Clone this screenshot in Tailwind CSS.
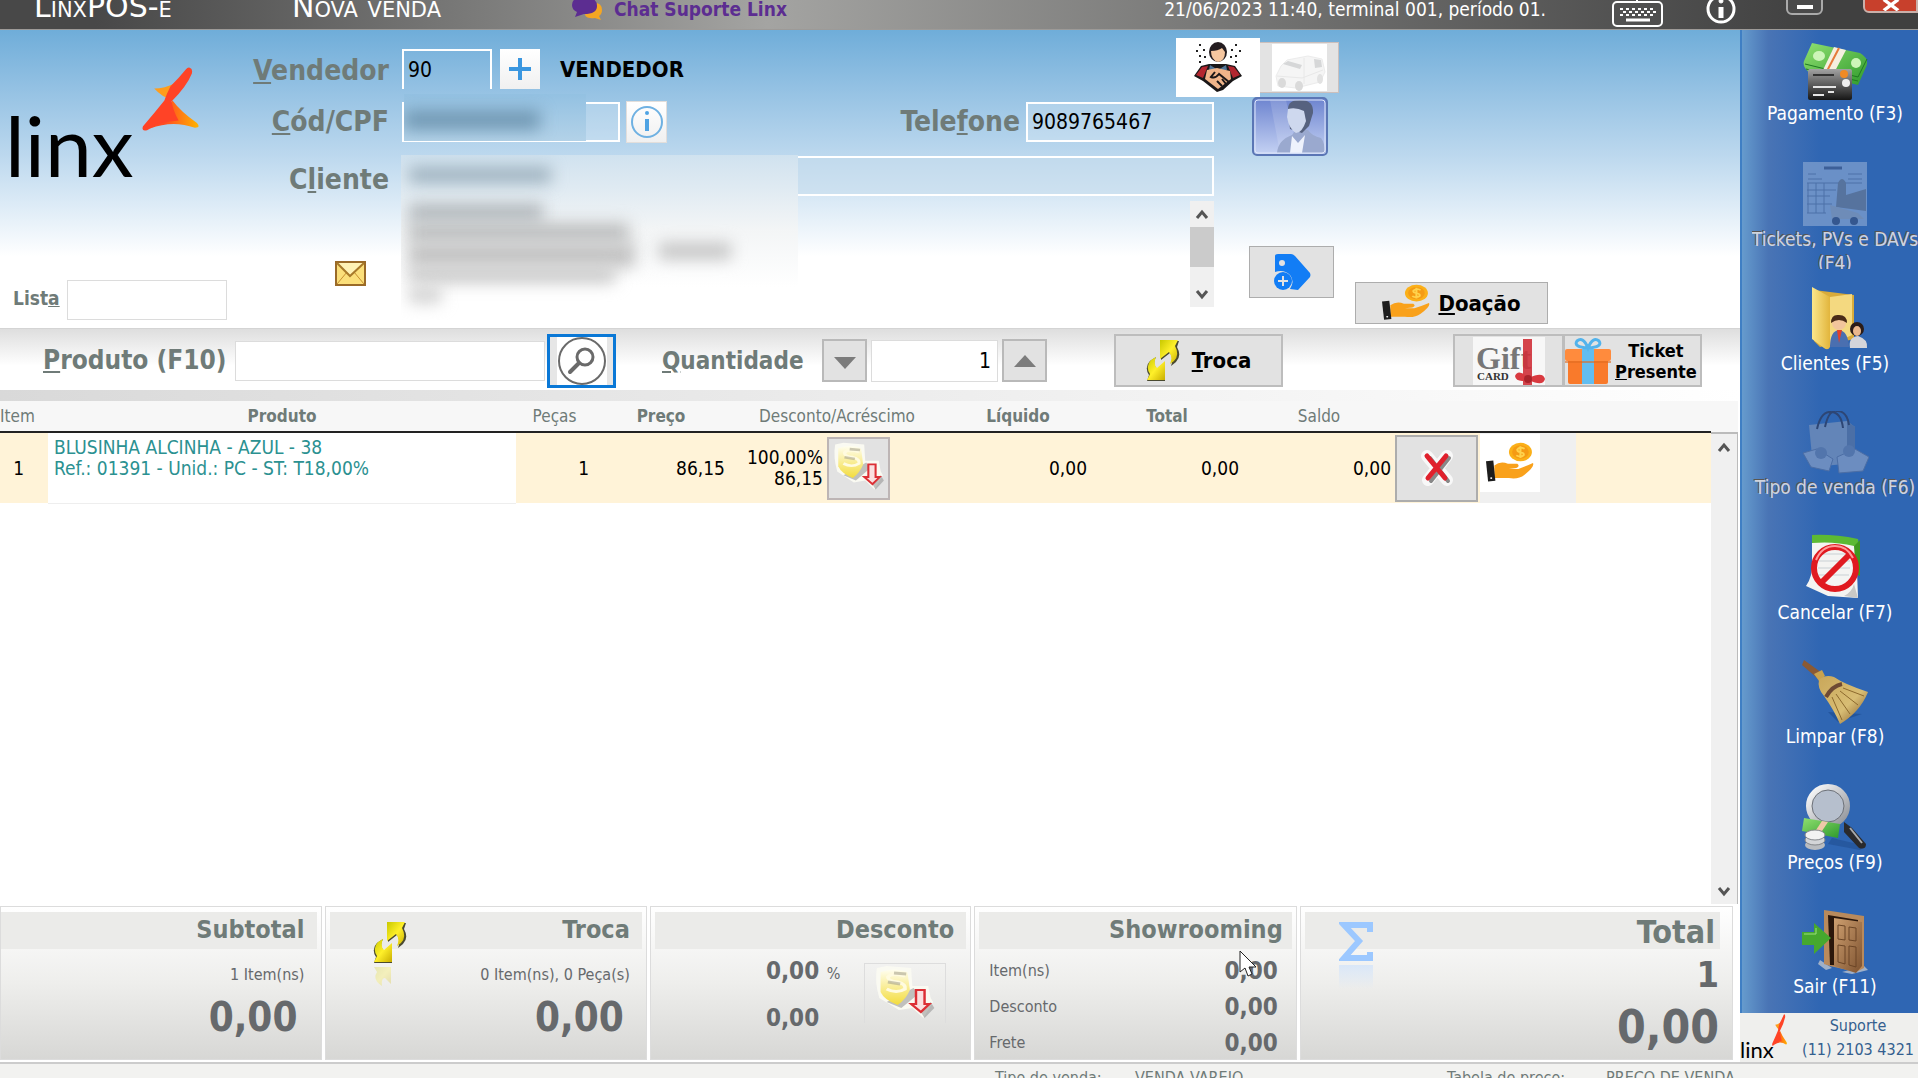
<!DOCTYPE html>
<html lang="pt-BR">

<head>
    <meta charset="UTF-8">
    <meta name="viewport" content="width=device-width, initial-scale=1">
    <title>LinxPOS-e | Nova venda</title>
    <script src="https://cdn.jsdelivr.net/npm/@tailwindcss/browser@4"></script>
</head>

<body class="h-screen flex flex-col overflow-hidden bg-white text-black font-['DejaVu_Sans_Condensed','Noto_Sans',sans-serif]">

    <!-- Shared drawings -->
    <svg class="absolute w-0 h-0" aria-hidden="true">
        <defs>
            <linearGradient id="orange" x1="0" y1="0" x2="1" y2="0"><stop offset="0.3" stop-color="#ff4b22"/><stop offset="1" stop-color="#ffb400"/></linearGradient>
            <linearGradient id="cash" x1="0" y1="0" x2="1" y2="1"><stop offset="0" stop-color="#8fe070"/><stop offset="1" stop-color="#2f9a2c"/></linearGradient>
            <linearGradient id="folder" x1="0" y1="0" x2="1" y2="0"><stop offset="0" stop-color="#fbe68b"/><stop offset="1" stop-color="#e2b53c"/></linearGradient>
            <linearGradient id="yellow" x1="0" y1="0" x2="1" y2="1"><stop offset="0" stop-color="#c8c800"/><stop offset="0.5" stop-color="#fff02a"/><stop offset="1" stop-color="#c9ae00"/></linearGradient>
            <linearGradient id="coin" x1="0" y1="0" x2="0" y2="1"><stop offset="0" stop-color="#fffef0"/><stop offset="1" stop-color="#f3dc3c"/></linearGradient>
            <linearGradient id="wood" x1="0" y1="0" x2="1" y2="1"><stop offset="0" stop-color="#cfa070"/><stop offset="1" stop-color="#7d5230"/></linearGradient>
            <linearGradient id="straw" x1="0" y1="0" x2="1" y2="1"><stop offset="0" stop-color="#c9a75a"/><stop offset="0.6" stop-color="#d8bd74"/><stop offset="1" stop-color="#7a4f20"/></linearGradient>
            <linearGradient id="silver" x1="0" y1="0" x2="1" y2="1"><stop offset="0" stop-color="#ffffff"/><stop offset="1" stop-color="#8c8f96"/></linearGradient>
            <linearGradient id="card" x1="0" y1="0" x2="0" y2="1"><stop offset="0" stop-color="#a3a3a3"/><stop offset="1" stop-color="#161616"/></linearGradient>
            <linearGradient id="portrait" x1="0" y1="0" x2="0" y2="1"><stop offset="0" stop-color="#6c83cf"/><stop offset="1" stop-color="#c6d3f4"/></linearGradient>

            <symbol id="flame" viewBox="0 0 56 80" preserveAspectRatio="none">
                <path d="M12 27 Q22 27 33 20 L28 40 Q20 38 12 27Z" fill="#ff9d1c"/>
                <path d="M30 42 Q38 56 54 70 Q58 76 52 76 Q30 66 8 77Z" fill="url(#orange)"/>
                <path d="M47 1 Q50 2 49 8 Q44 24 29 43 Q31 56 36 67 Q18 68 5 79 Q-1 81 1 74 Q12 58 22 42 Q24 34 28 24 Q36 14 43 3 Q45 0 47 1Z" fill="#ff4326"/>
            </symbol>

            <symbol id="swap" viewBox="0 0 34 42">
                <path d="M15 1 H33 L31 7 Q36 16 30 22 L25 26 Q28 18 24 13 L15 20Z" fill="#4a4a30"/>
                <path d="M19 41 H1 L3 35 Q-2 27 4 21 L10 17 Q6 24 11 29 L19 22Z" fill="#4a4a30"/>
                <path d="M14 0 H32 L29 6 Q34 15 28 21 L24 24 Q27 17 23 12 L14 19Z" fill="url(#yellow)"/>
                <path d="M19 40 H1 L4 34 Q-1 26 5 20 L10 17 Q7 24 11 28 L19 21Z" fill="url(#yellow)"/>
            </symbol>

            <symbol id="donate" viewBox="0 0 46 50" preserveAspectRatio="none">
                <circle cx="33" cy="12" r="11" fill="#fbb018"/>
                <circle cx="33" cy="12" r="8" fill="#f59b14"/>
                <path d="M37 8 Q32 5 30 9 Q30 12 33 12 Q37 13 36 16 Q33 19 29 16 M33 5 V19" fill="none" stroke="#ffd34d" stroke-width="2"/>
                <path d="M8 28 Q14 22 21 26 L30 26 Q33 29 29 31 L22 32 L31 32 Q38 29 45 25 Q47 29 37 39 Q31 45 22 43 L8 43Z" fill="#f9a11b"/>
                <path d="M0 23 L7 22 L9 46 L2 47Z" fill="#1d1d1d"/>
                <circle cx="5" cy="43" r="1" fill="#fff"/>
            </symbol>

            <symbol id="discount" viewBox="0 0 54 60" preserveAspectRatio="none">
                <path d="M4 4 L12 2 L32 4 L33 22 L40 22 L46 22 L48 34 L50 38 L42 54 L33 44 L22 46 L6 34 Q2 18 4 4Z" fill="#fafaf2"/>
                <path d="M12 38 L24 44 L38 30 L34 24Z" fill="#999" opacity="0.6"/>
                <path d="M7 8 Q18 3 29 8 L31 26 Q28 35 21 41 Q10 36 7 28Z" fill="url(#coin)"/>
                <path d="M27 12 Q16 8 13 13 Q13 17 21 18 Q28 20 27 25 Q20 30 12 25" fill="none" stroke="#fffbe0" stroke-width="3"/>
                <path d="M18 9 L28 10 M13 18 L23 20" stroke="#aaa690" stroke-width="3" opacity="0.6"/>
                <path d="M40 48 L48 38 L51 44 L43 54Z" fill="#888" opacity="0.5"/>
                <path d="M36 26 H43 V40 H47 L40 48 L32 40 H36Z" fill="#fbe0e0" stroke="#dc2f35" stroke-width="2"/>
            </symbol>
        </defs>
    </svg>

    <!-- Title bar -->
    <header class="h-[30px] shrink-0 flex items-center overflow-hidden text-[19px] leading-5 text-white bg-linear-to-r from-[#484848] via-[#a4a4a2] to-[#404040] from-5% via-40% to-95% border-b border-[#9d9a97]">
        <h1 class="ml-[34px] w-[258px] shrink-0 -mt-4 text-[30px] leading-7 whitespace-nowrap font-['DejaVu_Sans'] [font-variant-caps:small-caps]">LinxPOS-e</h1>
        <h2 class="w-[280px] shrink-0 -mt-4 text-[30px] leading-7 whitespace-nowrap font-['DejaVu_Sans'] [font-variant-caps:small-caps]">Nova venda</h2>
        <a href="#" class="flex items-center gap-3 -mt-3 font-bold text-[#5c2d91]">
            <svg width="30" height="24" viewBox="0 0 30 24">
                <path d="M18 6 Q30 4 30 13 Q30 17 27 19 L29 23 L23 21 Q15 22 13 18Z" fill="#f5a623"/>
                <path d="M12 0 Q25 0 25 9 Q25 17 12 17 L3 20 L5 15 Q0 13 0 8 Q0 0 12 0Z" fill="#5c2d91"/>
            </svg>
            Chat Suporte Linx
        </a>
        <p class="ml-auto -mt-3 whitespace-nowrap">21/06/2023 11:40, terminal 001, período 01.</p>
        <button aria-label="Teclado" class="ml-[66px] -mt-1">
            <svg width="52" height="30" viewBox="0 0 52 30" fill="none" stroke="#fff" stroke-width="2">
                <rect x="1" y="4" width="49" height="24" rx="4"/>
                <path d="M25 4 V0"/>
                <path d="M8 11 H44 M11 14 H44 M8 17 H44" stroke-dasharray="3 3"/>
                <path d="M14 22 H38" stroke-width="3"/>
            </svg>
        </button>
        <button aria-label="Informações" class="ml-[42px] -mt-3">
            <svg width="30" height="34" viewBox="0 0 30 34" fill="none" stroke="#fff">
                <circle cx="15" cy="17" r="13" stroke-width="3"/>
                <path d="M15 15 V26" stroke-width="5"/>
                <circle cx="15" cy="9" r="2" fill="#fff"/>
            </svg>
        </button>
        <button aria-label="Minimizar" class="ml-[50px] w-[37px] h-[28px] -mt-7 pt-3 flex justify-center items-center rounded-b-md border-2 border-[#aaa] bg-[#4a4a4a]">
            <span class="w-4 h-1 bg-white"></span>
        </button>
        <button aria-label="Fechar" class="ml-[40px] w-[55px] h-[28px] shrink-0 -mt-8 pt-3 flex justify-center items-center rounded-bl-md border-2 border-[#c9b0aa] bg-[#c8402c]">
            <svg width="18" height="12" viewBox="0 0 18 16" preserveAspectRatio="none"><path d="M2 1 L16 15 M16 1 L2 15" stroke="#fff" stroke-width="4"/></svg>
        </button>
    </header>

    <div class="flex flex-1 min-h-0">
        <main class="relative flex-1 min-w-0 flex flex-col">

            <!-- Customer form -->
            <form class="flex shrink-0 pb-1 bg-linear-to-b from-[#6fadd9] via-[#bcd8ee] to-white via-42% to-76%">
                <div class="w-[240px] shrink-0 flex flex-col justify-between pt-[37px] pb-[4px]">
                    <div class="flex items-end pl-[5px]" role="img" aria-label="Linx">
                        <span class="w-[137px] text-[84px] leading-[64px] -mb-[46px] font-['Lato']">linx</span>
                        <svg width="57" height="64"><use href="#flame"/></svg>
                    </div>
                    <div class="flex items-center pl-[13px]">
                        <label for="lista" class="w-[54px] pb-1 text-[19px] font-bold text-[#6f7b78]">List<u>a</u></label>
                        <input id="lista" type="text" class="w-[160px] h-10 px-2 text-xl bg-white border border-[#dcdcdc]">
                    </div>
                </div>

                <div class="flex-1 min-w-0">
                    <div class="flex items-center gap-[13px] h-[67px] pt-[7px]">
                        <label for="vendedor" class="w-[149px] pt-2 text-right text-[28px] font-bold text-[#6f7b78]"><u>V</u>endedor</label>
                        <div class="flex items-center mt-1">
                            <input id="vendedor" type="text" value="90" class="w-[90px] h-10 px-1 text-[21px] border-2 border-b-0 border-white">
                            <button type="button" aria-label="Adicionar vendedor" class="ml-2 w-10 h-10 flex items-center justify-center bg-linear-to-b from-white to-[#f0f0f0]">
                                <svg width="22" height="22" viewBox="0 0 22 22"><path d="M11 0 V22 M0 11 H22" stroke="#3b97e0" stroke-width="4"/></svg>
                            </button>
                            <p class="ml-5 text-[22px] font-bold">VENDEDOR</p>
                        </div>
                        <div class="flex items-center ml-auto mr-[401px]">
                            <button type="button" aria-label="Atendimento" class="w-[84px] h-[59px] flex items-center justify-center bg-white">
                                <svg width="50" height="50" viewBox="0 0 50 50">
                                    <path d="M6 3 h2 M10 8 h2 M3 9 h2 M6 14 h2 M11 15 h2 M6 20 h2 M42 3 h2 M38 8 h2 M46 9 h2 M42 14 h2 M37 15 h2 M42 20 h2" stroke="#222" stroke-width="2"/>
                                    <path d="M16 22 L33 22 L42 24 L49 34 L40 39 L30 48 L24 50 L10 39 L1 34 L8 24Z" fill="#1a1718"/>
                                    <path d="M9 25 L15 24 L10 36 L3 33Z M41 25 L35 24 L40 36 L47 33Z" fill="#b3262f"/>
                                    <path d="M17 23 L25 28 L33 23 L34 28 L16 28Z" fill="#4f7396"/>
                                    <path d="M14 28 L24 26 L37 29 L38 37 L25 47 L12 37Z" fill="#f0b58a"/>
                                    <path d="M22 30 L18 35 Q22 37 26 32 L36 40 M29 37 L33 42 M24 39 L29 44" stroke="#1a1718" stroke-width="2" fill="none"/>
                                    <ellipse cx="25" cy="10" rx="9" ry="10" fill="#241d20"/>
                                    <path d="M18 9 Q25 9 29 6 L32 10 Q32 19 25 20 Q18 18 18 9Z" fill="#f6c7a0"/>
                                </svg>
                            </button>
                            <button type="button" aria-label="Veículo" disabled class="w-[79px] h-[51px] flex items-center justify-center bg-[#e3e3e3] border border-l-0 border-[#cbbfbc]">
                                <svg width="55" height="47" viewBox="0 0 55 47">
                                    <rect width="55" height="47" fill="#fff"/>
                                    <path d="M9 22 L15 16 L36 12 L50 15 L53 28 L48 38 L24 44 L6 42 L4 32Z" fill="#f5f5f5" stroke="#ececec"/>
                                    <path d="M11 20 L16 17 L30 21 L28 25Z M42 15 L49 16 L50 23 L43 24Z" fill="#d6d7d8"/>
                                    <path d="M32 14 V40 M5 32 L30 34 L51 26" stroke="#e8e8e8" fill="none"/>
                                    <ellipse cx="10" cy="39" rx="4" ry="5" fill="#dadada"/><ellipse cx="27" cy="42" rx="4" ry="5" fill="#dadada"/><ellipse cx="48" cy="35" rx="3" ry="5" fill="#e2e2e2"/>
                                </svg>
                            </button>
                        </div>
                    </div>

                    <div class="flex">
                        <div class="flex-1 max-w-[974px] pt-[5px]">
                            <div class="flex items-center gap-[13px] mb-[14px]">
                                <label for="cpf" class="w-[149px] text-right text-[28px] leading-10 font-bold text-[#6f7b78]"><u>C</u>ód/CPF</label>
                                <div class="flex items-center flex-1">
                                    <div class="relative">
                                        <input id="cpf" type="text" class="block w-[218px] h-10 px-1 text-[21px] border-2 border-white bg-white/20">
                                        <div class="absolute left-[2px] -top-2 w-[182px] h-[47px] overflow-hidden bg-linear-to-b from-[#93c1e2] to-[#b3d2e8]">
                                            <div class="mt-4 w-[136px] h-5 bg-[#5d84a0]/70 blur-[8px]"></div>
                                        </div>
                                    </div>
                                    <button type="button" aria-label="Informações do cliente" class="ml-[6px] w-[41px] h-[42px] -my-px flex items-center justify-center bg-linear-to-b from-white to-[#f0f0f0] border border-[#e2dedb]">
                                        <svg width="36" height="36" viewBox="0 0 36 36" fill="none">
                                            <circle cx="18" cy="18" r="15" stroke="#6fb1e2" stroke-width="2"/>
                                            <path d="M18 15 V27" stroke="#4fa3e3" stroke-width="4"/>
                                            <circle cx="18" cy="9" r="2" fill="#4fa3e3"/>
                                        </svg>
                                    </button>
                                    <label for="telefone" class="ml-auto mr-[6px] text-[28px] leading-10 font-bold text-[#6f7b78]">Tele<u>f</u>one</label>
                                    <input id="telefone" type="text" value="9089765467" class="w-[188px] h-10 px-1 text-[21px] border-2 border-white bg-white/20">
                                </div>
                            </div>
                            <div class="relative">
                                <div class="flex items-center gap-[13px] mb-[5px]">
                                    <label for="cliente" class="w-[149px] h-10 pt-1 text-right text-[28px] leading-10 font-bold text-[#6f7b78]">C<u>l</u>iente</label>
                                    <input id="cliente" type="text" class="flex-1 h-10 px-1 text-[21px] border-2 border-white bg-[#c5dbeb]/50">
                                </div>
                                <div class="flex">
                                    <div class="w-[162px] flex justify-end items-start pt-[60px] pr-9">
                                        <button type="button" aria-label="E-mail">
                                            <svg width="31" height="25" viewBox="0 0 31 25">
                                                <rect x="1" y="1" width="29" height="23" fill="#fbdf7a" stroke="#9a6a28" stroke-width="2"/>
                                                <path d="M2 23 L12 11 M29 23 L19 11" stroke="#c78f2e" fill="none"/>
                                                <path d="M2 2 L15 15 L29 2" fill="#fff2b5" stroke="#a87a2a" stroke-width="2"/>
                                            </svg>
                                        </button>
                                    </div>
                                    <textarea aria-label="Endereço do cliente" class="flex-1 h-[106px] resize-none"></textarea>
                                    <div class="w-6 h-[106px] flex flex-col items-center bg-[#f0f0f0]">
                                        <svg width="24" height="26" viewBox="0 0 24 26"><path d="M7 17 L12 11 L17 17" fill="none" stroke="#555" stroke-width="3"/></svg>
                                        <div class="w-full h-10 bg-[#cbcbcb]"></div>
                                        <svg width="24" height="26" viewBox="0 0 24 26" class="mt-auto"><path d="M7 10 L12 16 L17 10" fill="none" stroke="#555" stroke-width="3"/></svg>
                                    </div>
                                </div>
                                <!-- Masked customer data -->
                                <div class="absolute left-[161px] -top-px w-[397px] h-[165px] overflow-hidden bg-linear-to-b from-[#d0e2ef] via-[#f3f5f6] to-white via-45% to-80%">
                                    <div class="ml-2 mt-3 w-[142px] h-4 bg-[#8da2b0]/80 blur-[8px]"></div>
                                    <div class="ml-2 mt-5 w-[134px] h-5 bg-[#b4babe] blur-[8px]"></div>
                                    <div class="ml-2 w-[220px] h-5 bg-[#bcbebf] blur-[8px]"></div>
                                    <div class="flex gap-6 ml-2">
                                        <div class="w-[226px] h-6 bg-[#c2c2c2] blur-[8px]"></div>
                                        <div class="w-[72px] h-4 bg-[#c2c2c2] blur-[8px]"></div>
                                    </div>
                                    <div class="ml-2 w-[206px] h-4 bg-[#c8c8c8] blur-[8px]"></div>
                                    <div class="ml-2 mt-1 w-8 h-4 bg-[#cfcfcf] blur-[8px]"></div>
                                </div>
                            </div>
                        </div>

                        <div class="flex items-end shrink-0 ml-[35px]">
                            <div class="self-start flex flex-col gap-[90px] w-[85px]">
                                <button type="button" aria-label="Foto do cliente" class="ml-[3px] w-[76px] h-[59px]">
                                    <svg width="76" height="59" viewBox="0 0 76 59">
                                        <rect x="1" y="1" width="74" height="57" rx="4" fill="url(#portrait)" stroke="#5b76b5" stroke-width="2"/>
                                        <path d="M18 3 H34 L46 56 H28Z" fill="#fff" opacity="0.14"/>
                                        <path d="M25 56 Q26 43 40 38 L44 33 L56 33 Q60 39 69 41 Q73 46 73 56Z" fill="#9aa9cf"/>
                                        <path d="M40 39 L46 46 L53 38 L50 56 H38Z" fill="#eef2fc"/>
                                        <path d="M36 12 Q36 3 48 3 Q62 3 61 16 L57 29 L50 36 L38 32Z" fill="#56627f"/>
                                        <path d="M36 12 Q44 10 52 14 L54 24 Q50 36 44 36 Q37 32 35 20Z" fill="#ced8ee"/>
                                        <rect x="3" y="3" width="70" height="53" rx="3" fill="none" stroke="#dfe7fa" stroke-width="1"/>
                                    </svg>
                                </button>
                                <button type="button" aria-label="Adicionar etiqueta" class="w-[85px] h-[52px] flex items-center justify-center bg-[#e2e2e2] border border-[#adadad]">
                                    <svg width="38" height="38" viewBox="0 0 38 38">
                                        <path d="M2 3 Q2 1 5 1 L18 1 Q20 1 22 3 L37 20 Q38 22 37 24 L25 37 L17 36 Q22 28 17 22 Q11 16 2 19Z" fill="#127df5"/>
                                        <circle cx="9" cy="10" r="3" fill="#e2e2e2"/>
                                        <circle cx="10" cy="28" r="9" fill="#127df5"/>
                                        <path d="M10 23 V33 M5 28 H15" stroke="#e2e2e2" stroke-width="2"/>
                                    </svg>
                                </button>
                            </div>
                            <button type="button" class="mt-[185px] ml-[21px] mr-[192px] w-[193px] h-[42px] flex items-center justify-center gap-2 text-[22px] font-bold bg-[#e2e2e2] border border-[#adadad]">
                                <svg width="48" height="38"><use href="#donate"/></svg>
                                <span><u>D</u>oação</span>
                            </button>
                        </div>
                    </div>
                </div>
            </form>

            <!-- Product bar -->
            <form class="flex items-center shrink-0 h-[62px] pt-[2px] pr-[38px] border-t border-[#d4d4d4] bg-linear-to-b from-[#dedede] to-white to-60%">
                <label for="produto" class="w-[235px] shrink-0 pl-[43px] text-[26px] font-bold text-[#6f7b78]"><u>P</u>roduto (F10)</label>
                <input id="produto" type="text" class="w-[310px] h-10 px-2 text-[21px] bg-white border border-[#dcdcdc]">
                <button type="button" aria-label="Pesquisar" class="ml-[2px] w-[69px] h-[54px] flex items-center justify-center border-3 border-[#0a78d6] bg-[#e6e6e6]">
                    <svg width="50" height="48" viewBox="0 0 50 48" fill="none" stroke="#6a6a6a">
                        <rect width="50" height="48" fill="#fff" stroke="none"/>
                        <circle cx="25" cy="24" r="23" stroke-width="2"/>
                        <circle cx="28" cy="20" r="8" stroke-width="3"/>
                        <path d="M22 26 L13 35" stroke-width="4" stroke-linecap="round"/>
                    </svg>
                </button>
                <label for="quantidade" class="ml-[46px] w-[160px] text-2xl font-bold text-[#6f7b78]"><u>Q</u>uantidade</label>
                <button type="button" aria-label="Diminuir" class="w-[45px] h-[43px] pt-1 flex items-center justify-center bg-[#e2e2e2] border-2 border-[#b9b9b9]">
                    <svg width="22" height="12"><path d="M0 0 H22 L11 12Z" fill="#7c7c7c"/></svg>
                </button>
                <input id="quantidade" type="text" value="1" class="mx-1 w-[127px] h-[42px] px-[6px] text-right text-[21px] bg-white border border-[#dcdcdc]">
                <button type="button" aria-label="Aumentar" class="w-[45px] h-[43px] flex items-center justify-center bg-[#e2e2e2] border-2 border-[#b9b9b9]">
                    <svg width="22" height="12"><path d="M0 12 H22 L11 0Z" fill="#7c7c7c"/></svg>
                </button>
                <button type="button" class="ml-[67px] w-[169px] h-[53px] flex items-center justify-center gap-3 text-[22px] font-bold bg-[#e2e2e2] border-2 border-[#bdbdbd]">
                    <svg width="34" height="42"><use href="#swap"/></svg>
                    <span><u>T</u>roca</span>
                </button>
                <div class="ml-auto flex">
                    <button type="button" aria-label="Gift Card" class="w-[111px] h-[53px] flex items-center justify-center bg-[#e2e2e2] border-2 border-[#bdbdbd]">
                        <svg width="72" height="48" viewBox="0 0 72 48">
                            <rect width="72" height="48" fill="#f7f7f7"/>
                            <text x="3" y="32" font-family="Liberation Serif" font-size="32" font-weight="bold" fill="#777">Gift</text>
                            <text x="4" y="43" font-family="Liberation Serif" font-size="11" font-weight="bold" fill="#333">CARD</text>
                            <rect x="50" y="2" width="9" height="46" fill="#cf3038" opacity="0.9"/>
                            <path d="M56 41 Q45 31 42 39 Q43 46 56 43 Q70 50 72 42 Q70 34 56 41Z" fill="#d93a40"/>
                            <circle cx="55" cy="42" r="4" fill="#a9242b"/>
                        </svg>
                    </button>
                    <button type="button" class="-ml-px w-[139px] h-[53px] flex items-center gap-1 text-lg leading-[21px] font-bold bg-[#e2e2e2] border-2 border-[#bdbdbd]">
                        <svg width="46" height="48" viewBox="0 0 46 48">
                            <rect x="3" y="17" width="40" height="30" rx="2" fill="#f97a2b"/>
                            <rect x="0" y="12" width="46" height="12" rx="2" fill="#ff8b3d"/>
                            <rect x="17" y="12" width="12" height="35" fill="#62bdf0"/>
                            <rect x="0" y="24" width="46" height="2" fill="#e06a1f" opacity="0.6"/>
                            <path d="M23 11 Q8 10 12 4 Q18 -1 23 11 Q28 -1 34 4 Q38 10 23 11Z" fill="none" stroke="#52b3ec" stroke-width="3"/>
                        </svg>
                        <span>Ticket<br><u>P</u>resente</span>
                    </button>
                </div>
            </form>
            <div class="h-[11px] shrink-0 bg-linear-to-r from-[#d9d9d9] to-white"></div>

            <!-- Items -->
            <section class="flex flex-1 min-h-0 pr-[2px]">
                <div class="flex-1 min-w-0">
                    <table class="w-full table-fixed text-[19px] leading-[21px]">
                        <colgroup>
                            <col class="w-[48px]"><col class="w-[468px]"><col class="w-[77px]"><col class="w-[136px]"><col class="w-[216px]"><col class="w-[146px]">
                            <col class="w-[152px]"><col class="w-[152px]"><col class="w-[85px]"><col class="w-[96px]"><col>
                        </colgroup>
                        <thead class="text-[17px] text-[#6f7b78] bg-[#f7f7f7] border-b-2 border-[#222]">
                            <tr class="h-[31px]">
                                <th class="font-normal text-left">Item</th>
                                <th>Produto</th>
                                <th class="font-normal">Peças</th>
                                <th>Preço</th>
                                <th class="font-normal">Desconto/Acréscimo</th>
                                <th>Líquido</th>
                                <th>Total</th>
                                <th class="font-normal">Saldo</th>
                                <td></td><td></td><td></td>
                            </tr>
                        </thead>
                        <tbody>
                            <tr class="h-[71px] bg-[#fff3d8] text-right">
                                <td class="pr-6">1</td>
                                <td class="pl-[6px] pt-1 text-left align-top bg-white text-[#2b9191] whitespace-nowrap border-b border-[#eee]">BLUSINHA ALCINHA - AZUL - 38<br>Ref.: 01391 - Unid.: PC - ST: T18,00%</td>
                                <td class="pr-1">1</td>
                                <td class="pr-1">86,15</td>
                                <td>
                                    <div class="flex items-center gap-1">
                                        <p class="w-[94px]">100,00%<br>86,15</p>
                                        <button aria-label="Desconto no item" class="w-[63px] h-[63px] flex items-center justify-center bg-[#e2e2e2] border-2 border-[#bdb5b5]">
                                            <svg width="56" height="54"><use href="#discount"/></svg>
                                        </button>
                                    </div>
                                </td>
                                <td class="pr-1">0,00</td>
                                <td class="pr-1">0,00</td>
                                <td class="pr-1">0,00</td>
                                <td>
                                    <button aria-label="Remover item" class="w-[83px] h-[67px] flex items-center justify-center bg-[#e2e2e2] border-2 border-[#adadad]">
                                        <svg width="36" height="36" viewBox="0 0 36 36" fill="none" stroke-linecap="round">
                                            <path d="M8 6 Q18 18 28 30 M28 6 L9 30" stroke="#f8f8f8" stroke-width="12"/>
                                            <path d="M11 8 L29 31 M30 8 L12 31" stroke="#888" stroke-width="4"/>
                                            <path d="M8 6 L26 28 M27 6 L9 28" stroke="#e0202c" stroke-width="5"/>
                                        </svg>
                                    </button>
                                </td>
                                <td class="align-top bg-[#f0f0f0]">
                                    <button aria-label="Doar item" class="mt-px w-[60px] h-[58px] flex items-center justify-center bg-white">
                                        <svg width="48" height="42"><use href="#donate"/></svg>
                                    </button>
                                </td>
                                <td></td>
                            </tr>
                        </tbody>
                    </table>
                </div>
                <div class="w-[27px] flex flex-col">
                    <div class="h-[31px] bg-[#f7f7f7]"></div>
                    <div class="flex-1 w-full mb-[2px] flex flex-col items-center justify-between bg-[#f0f0f0] border-t-2 border-r border-[#bbb]">
                        <svg width="24" height="26" viewBox="0 0 24 26"><path d="M7 17 L12 11 L17 17" fill="none" stroke="#555" stroke-width="3"/></svg>
                        <svg width="24" height="26" viewBox="0 0 24 26"><path d="M7 10 L12 16 L17 10" fill="none" stroke="#555" stroke-width="3"/></svg>
                    </div>
                </div>
            </section>

            <!-- Totals -->
            <section class="relative grid grid-cols-[323fr_322fr_322fr_323fr_434fr] gap-x-[3px] shrink-0 h-[154px] mr-[7px] text-[#66696c] font-bold">
                <article class="text-right bg-linear-to-b from-white via-[#eeeeec] to-[#d7d7d5] border border-[#dcdcdc] pt-[5px]">
                    <h3 class="mr-1 pr-[13px] h-[37px] text-[25px] leading-9 bg-[#ebebe9] text-[#6f7b78]">Subtotal</h3>
                    <p class="pr-[17px] pt-[14px] text-base leading-6 font-normal">1 Item(ns)</p>
                    <p class="pr-[24px] pt-[6px] text-[40px] leading-[48px]">0,00</p>
                </article>
                <article class="relative text-right bg-linear-to-b from-white via-[#eeeeec] to-[#d7d7d5] border border-[#dcdcdc] pt-[5px]">
                    <h3 class="mx-1 pr-[12px] h-[37px] text-[25px] leading-9 bg-[#ebebe9] text-[#6f7b78]">Troca</h3>
                    <svg width="34" height="42" class="absolute left-[47px] top-[15px]"><use href="#swap"/></svg>
                    <svg width="34" height="20" viewBox="0 0 34 20" class="absolute left-[47px] top-[59px] opacity-25"><path d="M1 1 H18 V18 L12 12 Q8 12 9 20 Q-1 14 4 6Z" fill="url(#yellow)"/></svg>
                    <p class="pr-[16px] pt-[14px] text-base leading-6 font-normal">0 Item(ns), 0 Peça(s)</p>
                    <p class="pr-[22px] pt-[6px] text-[40px] leading-[48px]">0,00</p>
                </article>
                <article class="bg-linear-to-b from-white via-[#eeeeec] to-[#d7d7d5] border border-[#dcdcdc] pt-[5px]">
                    <h3 class="mx-1 pr-[12px] h-[37px] text-right text-[25px] leading-9 bg-[#ebebe9] text-[#6f7b78]">Desconto</h3>
                    <div class="flex pt-[6px] pl-[115px]">
                        <div class="w-[98px] text-2xl">
                            <p class="pb-[15px] leading-8">0,00 <span class="text-base font-normal">%</span></p>
                            <p class="leading-8">0,00</p>
                        </div>
                        <button aria-label="Desconto na venda" class="mt-2 w-[82px] h-[60px] flex items-start justify-center border border-b-0 border-[#ddd]">
                            <svg width="66" height="60"><use href="#discount"/></svg>
                        </button>
                    </div>
                </article>
                <article class="bg-linear-to-b from-white via-[#eeeeec] to-[#d7d7d5] border border-[#dcdcdc] pt-[5px]">
                    <h3 class="mx-1 pr-[9px] h-[37px] text-right text-[25px] leading-9 bg-[#ebebe9] text-[#6f7b78]">Showrooming</h3>
                    <dl class="grid grid-cols-2 gap-y-1 pt-[6px] pl-[14px] pr-[18px] text-base leading-8 font-normal">
                        <dt>Item(ns)</dt><dd class="text-right text-2xl leading-8 font-bold">0,00</dd>
                        <dt>Desconto</dt><dd class="text-right text-2xl leading-8 font-bold">0,00</dd>
                        <dt>Frete</dt><dd class="text-right text-2xl leading-8 font-bold">0,00</dd>
                    </dl>
                </article>
                <article class="relative text-right bg-linear-to-b from-white via-[#eeeeec] to-[#d7d7d5] border border-[#dcdcdc] pt-[5px]">
                    <h3 class="ml-1 mr-3 pr-[5px] h-[37px] text-[32px] leading-[40px] bg-[#ebebe9] text-[#6f7b78]">Total</h3>
                    <svg width="34" height="42" viewBox="0 0 34 42" class="absolute left-[38px] top-[14px]"><path d="M31 11 V4 H5 L20 20 L5 37 H31 V31" fill="none" stroke="#9cc8ff" stroke-width="6"/></svg>
                    <div class="absolute left-[38px] top-[58px] w-[34px] h-6 bg-linear-to-b from-[#cfe2fb] to-transparent opacity-70"></div>
                    <p class="pr-[13px] pt-1 text-[36px] leading-[44px]">1</p>
                    <p class="pr-[13px] pt-1 text-[46px] leading-[52px]">0,00</p>
                </article>
            </section>
            <!-- Mouse pointer -->
            <svg width="18" height="28" viewBox="0 0 18 28" class="absolute left-[1239px] bottom-[100px]"><path d="M1 1 V22 L6 18 L9 26 L13 24 L10 17 H17Z" fill="#fff" stroke="#222" stroke-width="1"/></svg>
            <footer class="h-4 shrink-0 mt-[2px] pt-1 flex overflow-hidden text-base leading-5 text-[#6f7b78] bg-[#f2f2f0] border-t-2 border-[#ccc]">
                <p class="ml-auto w-[140px]">Tipo de venda:</p>
                <p class="w-[312px]">VENDA VAREJO</p>
                <p class="w-[159px]">Tabela de preço:</p>
                <p class="w-[134px] whitespace-nowrap">PREÇO DE VENDA</p>
            </footer>
        </main>

        <!-- Shortcuts -->
        <aside class="w-[178px] shrink-0 flex flex-col overflow-hidden">
            <nav class="flex-1 flex flex-col justify-between items-center pt-[7px] pb-[15px] pl-[10px] text-[19px] leading-6 text-white whitespace-nowrap bg-linear-to-r from-[#669bcd] via-[#4974b5] to-[#2f66b3] via-15% to-45% border-l-2 border-[#3f7fc4]">
                <button class="flex flex-col items-center">
                    <svg width="66" height="64" viewBox="0 0 66 64">
                        <path d="M10 6 L58 16 Q68 22 64 30 L56 48 L8 36 Q0 30 2 24Z" fill="url(#cash)"/>
                        <path d="M3 27 L56 40 L65 22 M4 32 L56 44" stroke="#1f7a22" fill="none"/>
                        <ellipse cx="17" cy="19" rx="6" ry="5" fill="#cdf5b8"/><ellipse cx="54" cy="26" rx="5" ry="5" fill="#cdf5b8"/>
                        <path d="M32 10 L44 13 L32 36 L21 33Z" fill="#f5efdf"/><path d="M37 11 L25 34" stroke="#e57a3a" stroke-width="2"/>
                        <rect x="6" y="32" width="44" height="31" rx="2" fill="url(#card)"/>
                        <circle cx="42" cy="37" r="4" fill="#f08a24"/><circle cx="44" cy="46" r="4" fill="#eee"/>
                        <path d="M11 38 H32" stroke="#333" stroke-width="2"/><path d="M11 50 H34 M11 58 H22 M26 55 H32" stroke="#e5e5e5" stroke-width="2"/>
                    </svg>
                    Pagamento (F3)
                </button>
                <button disabled class="flex flex-col items-center text-[#cfd4de]">
                    <svg width="66" height="66" viewBox="0 0 66 66">
                        <rect x="1" y="1" width="64" height="64" fill="#7f9fcd" opacity="0.75"/>
                        <path d="M22 7 H40" stroke="#3c5f98" stroke-width="3"/>
                        <path d="M6 13 H14 M6 18 H20 M46 13 H60 M46 18 H60 M5 22 H60 M5 29 H34 M5 35 H28 M5 43 H30 M5 52 H24 M6 22 V52 M14 22 V52 M22 22 V52" stroke="#4d70a8" stroke-width="1"/>
                        <path d="M36 22 Q40 14 44 22 V34 L64 28 V50 L34 46Z" fill="#56739e"/>
                        <path d="M28 44 L56 52 L62 58 H30Z" fill="#6e8cb8"/>
                        <circle cx="34" cy="60" r="4" fill="#35578f"/><circle cx="52" cy="60" r="4" fill="#35578f"/>
                    </svg>
                    <span class="h-[42px] -mb-[18px] overflow-hidden [text-shadow:-1px_-1px_0_#5a5550]">Tickets, PVs e DAVs<br>(F4)</span>
                </button>
                <button class="flex flex-col items-center">
                    <svg width="66" height="64" viewBox="0 0 66 64">
                        <path d="M12 3 L52 8 V52 L18 60 L12 54Z" fill="#d9ab3a"/>
                        <path d="M10 0 L28 10 V60 Q26 64 22 61 L10 52Z" fill="url(#folder)"/>
                        <path d="M28 10 L50 7 V48 L28 58Z" fill="#f4d980"/>
                        <path d="M28 60 Q28 44 37 43 Q46 44 47 60Z" fill="#4a6fb0"/><path d="M35 43 L37 56 L40 43Z" fill="#e0402c"/>
                        <circle cx="37" cy="36" r="7" fill="#f2c59c"/><path d="M29 36 Q29 27 37 28 Q45 28 45 36 Q37 30 29 36Z" fill="#4a2c18"/>
                        <path d="M48 61 Q46 50 56 49 Q66 52 65 61Z" fill="#d5d5da"/>
                        <circle cx="55" cy="42" r="7" fill="#2b1c18"/><ellipse cx="55" cy="44" rx="4" ry="5" fill="#eab78c"/>
                    </svg>
                    Clientes (F5)
                </button>
                <button disabled class="flex flex-col items-center text-[#cfd4de]">
                    <svg width="68" height="64" viewBox="0 0 68 64">
                        <path d="M8 14 L46 10 L54 16 V52 L12 56Z" fill="#6385b8"/>
                        <path d="M46 10 L54 16 V52 L46 54Z" fill="#4b6fa6"/>
                        <path d="M16 18 Q20 0 30 1 Q40 1 42 17 M24 16 Q28 -2 36 0 Q46 0 48 14" fill="none" stroke="#2d4675" stroke-width="2"/>
                        <path d="M2 42 L16 38 L32 48 L28 60 L10 56Z M36 46 L54 38 L68 46 L62 60 L38 62Z" fill="#6c8dc0" stroke="#4c6ea5"/>
                        <circle cx="20" cy="42" r="6" fill="#5275ac"/><circle cx="48" cy="40" r="6" fill="#5275ac"/>
                    </svg>
                    <span class="[text-shadow:-1px_-1px_0_#5a5550]">Tipo de venda (F6)</span>
                </button>
                <button class="flex flex-col items-center">
                    <svg width="62" height="66" viewBox="0 0 62 66">
                        <path d="M8 3 L52 8 L54 64 L24 62 L2 52 Q9 42 8 28Z" fill="#f4f4f2"/>
                        <path d="M50 50 L54 64 L40 62 Q48 58 50 50Z" fill="#c8c8c6"/>
                        <path d="M8 1 Q30 0 54 5 Q56 12 50 12 Q30 7 8 9Z" fill="#5cba34"/><path d="M50 12 L56 6 V42 L52 40Z" fill="#3f9a20"/>
                        <path d="M16 20 H46 M15 27 H46 M14 34 H46 M14 41 H45" stroke="#c9d0d4"/>
                        <circle cx="31" cy="34" r="21" fill="none" stroke="#e01a20" stroke-width="6"/>
                        <path d="M17 49 L46 20" stroke="#e01a20" stroke-width="6"/>
                        <path d="M12 26 Q18 12 31 12 Q43 12 49 24" fill="none" stroke="#ff9a9a" stroke-width="2"/>
                    </svg>
                    Cancelar (F7)
                </button>
                <button class="flex flex-col items-center">
                    <svg width="66" height="64" viewBox="0 0 66 64">
                        <path d="M26 52 L60 54 L36 62Z" fill="#1d4a8c" opacity="0.6"/>
                        <path d="M2 0 L20 13 L15 18 L0 5Z" fill="#8a5a34"/>
                        <path d="M12 14 L20 10 L23 16 L17 21Z" fill="#c8a24e"/>
                        <path d="M17 20 Q23 14 32 17 Q42 24 66 32 Q58 52 38 64 Q32 50 22 36 Q15 28 17 20Z" fill="url(#straw)"/>
                        <path d="M24 37 Q30 26 40 24" stroke="#6e4a34" stroke-width="4" fill="none"/>
                        <path d="M30 37 L40 60 M34 34 L48 54 M38 31 L56 45 M41 28 L62 36" stroke="#8d6a2e" fill="none"/>
                    </svg>
                    Limpar (F8)
                </button>
                <button class="flex flex-col items-center">
                    <svg width="66" height="66" viewBox="0 0 66 66">
                        <path d="M30 54 L64 62 L58 66 L26 60Z" fill="#1d4a8c" opacity="0.5"/>
                        <path d="M42 38 L50 44 L64 60 Q64 66 57 64 L42 48Z" fill="#2a2a2c"/><path d="M48 44 L60 59" stroke="#aaa" stroke-width="2"/>
                        <circle cx="26" cy="22" r="19" fill="#b6bfcd" stroke="url(#silver)" stroke-width="6"/>
                        <circle cx="26" cy="22" r="16" fill="none" stroke="#6d7178"/>
                        <path d="M2 34 L38 40 L36 54 L0 47Z" fill="url(#cash)"/><path d="M20 37 L26 38 L18 50 L12 49Z" fill="#f0c9a8"/>
                        <ellipse cx="13" cy="61" rx="10" ry="5" fill="#b9bcc0"/><ellipse cx="13" cy="56" rx="10" ry="5" fill="#d3d5d8" stroke="#85888c"/><ellipse cx="13" cy="51" rx="10" ry="5" fill="#f2f2f2" stroke="#85888c"/>
                    </svg>
                    Preços (F9)
                </button>
                <button class="flex flex-col items-center">
                    <svg width="66" height="64" viewBox="0 0 66 64">
                        <path d="M18 50 L30 58 L24 60 L16 54Z M40 62 L62 56 L66 60 L50 64Z" fill="#9fb0c8"/>
                        <path d="M22 0 L62 6 V58 L54 62 L28 56 L22 54Z" fill="#b98a5c"/>
                        <path d="M26 5 L56 10 V56 L28 55Z" fill="#2b170b"/>
                        <path d="M32 8 L60 12 V56 L54 63 L32 56Z" fill="url(#wood)"/>
                        <path d="M36 15 L43 16 V30 L36 29Z M47 17 L54 18 V31 L47 30Z M36 35 L43 36 V54 L36 52Z M47 36 L54 37 V57 L47 55Z" fill="none" stroke="#6b4526"/>
                        <path d="M0 22 H12 V13 L29 28 L12 44 V35 H0Z" fill="#46a82e"/><path d="M2 24 H14 V18" stroke="#9be07a" fill="none"/>
                    </svg>
                    Sair (F11)
                </button>
            </nav>
            <div class="flex items-end h-[49px] shrink-0 bg-[#efefed] text-base leading-6 text-[#34608f]">
                <div class="flex w-[58px] shrink-0" role="img" aria-label="Linx">
                    <span class="w-8 self-end text-[22px] leading-6 text-black font-['Lato']">linx</span>
                    <svg width="15" height="32" class="mb-4"><use href="#flame"/></svg>
                </div>
                <p class="flex-1 whitespace-nowrap text-center">Suporte<br>(11) 2103 4321</p>
            </div>
            <div class="h-4 shrink-0 bg-[#f2f2f0] border-t-2 border-[#ccc]"></div>
        </aside>
    </div>

</body>

</html>
